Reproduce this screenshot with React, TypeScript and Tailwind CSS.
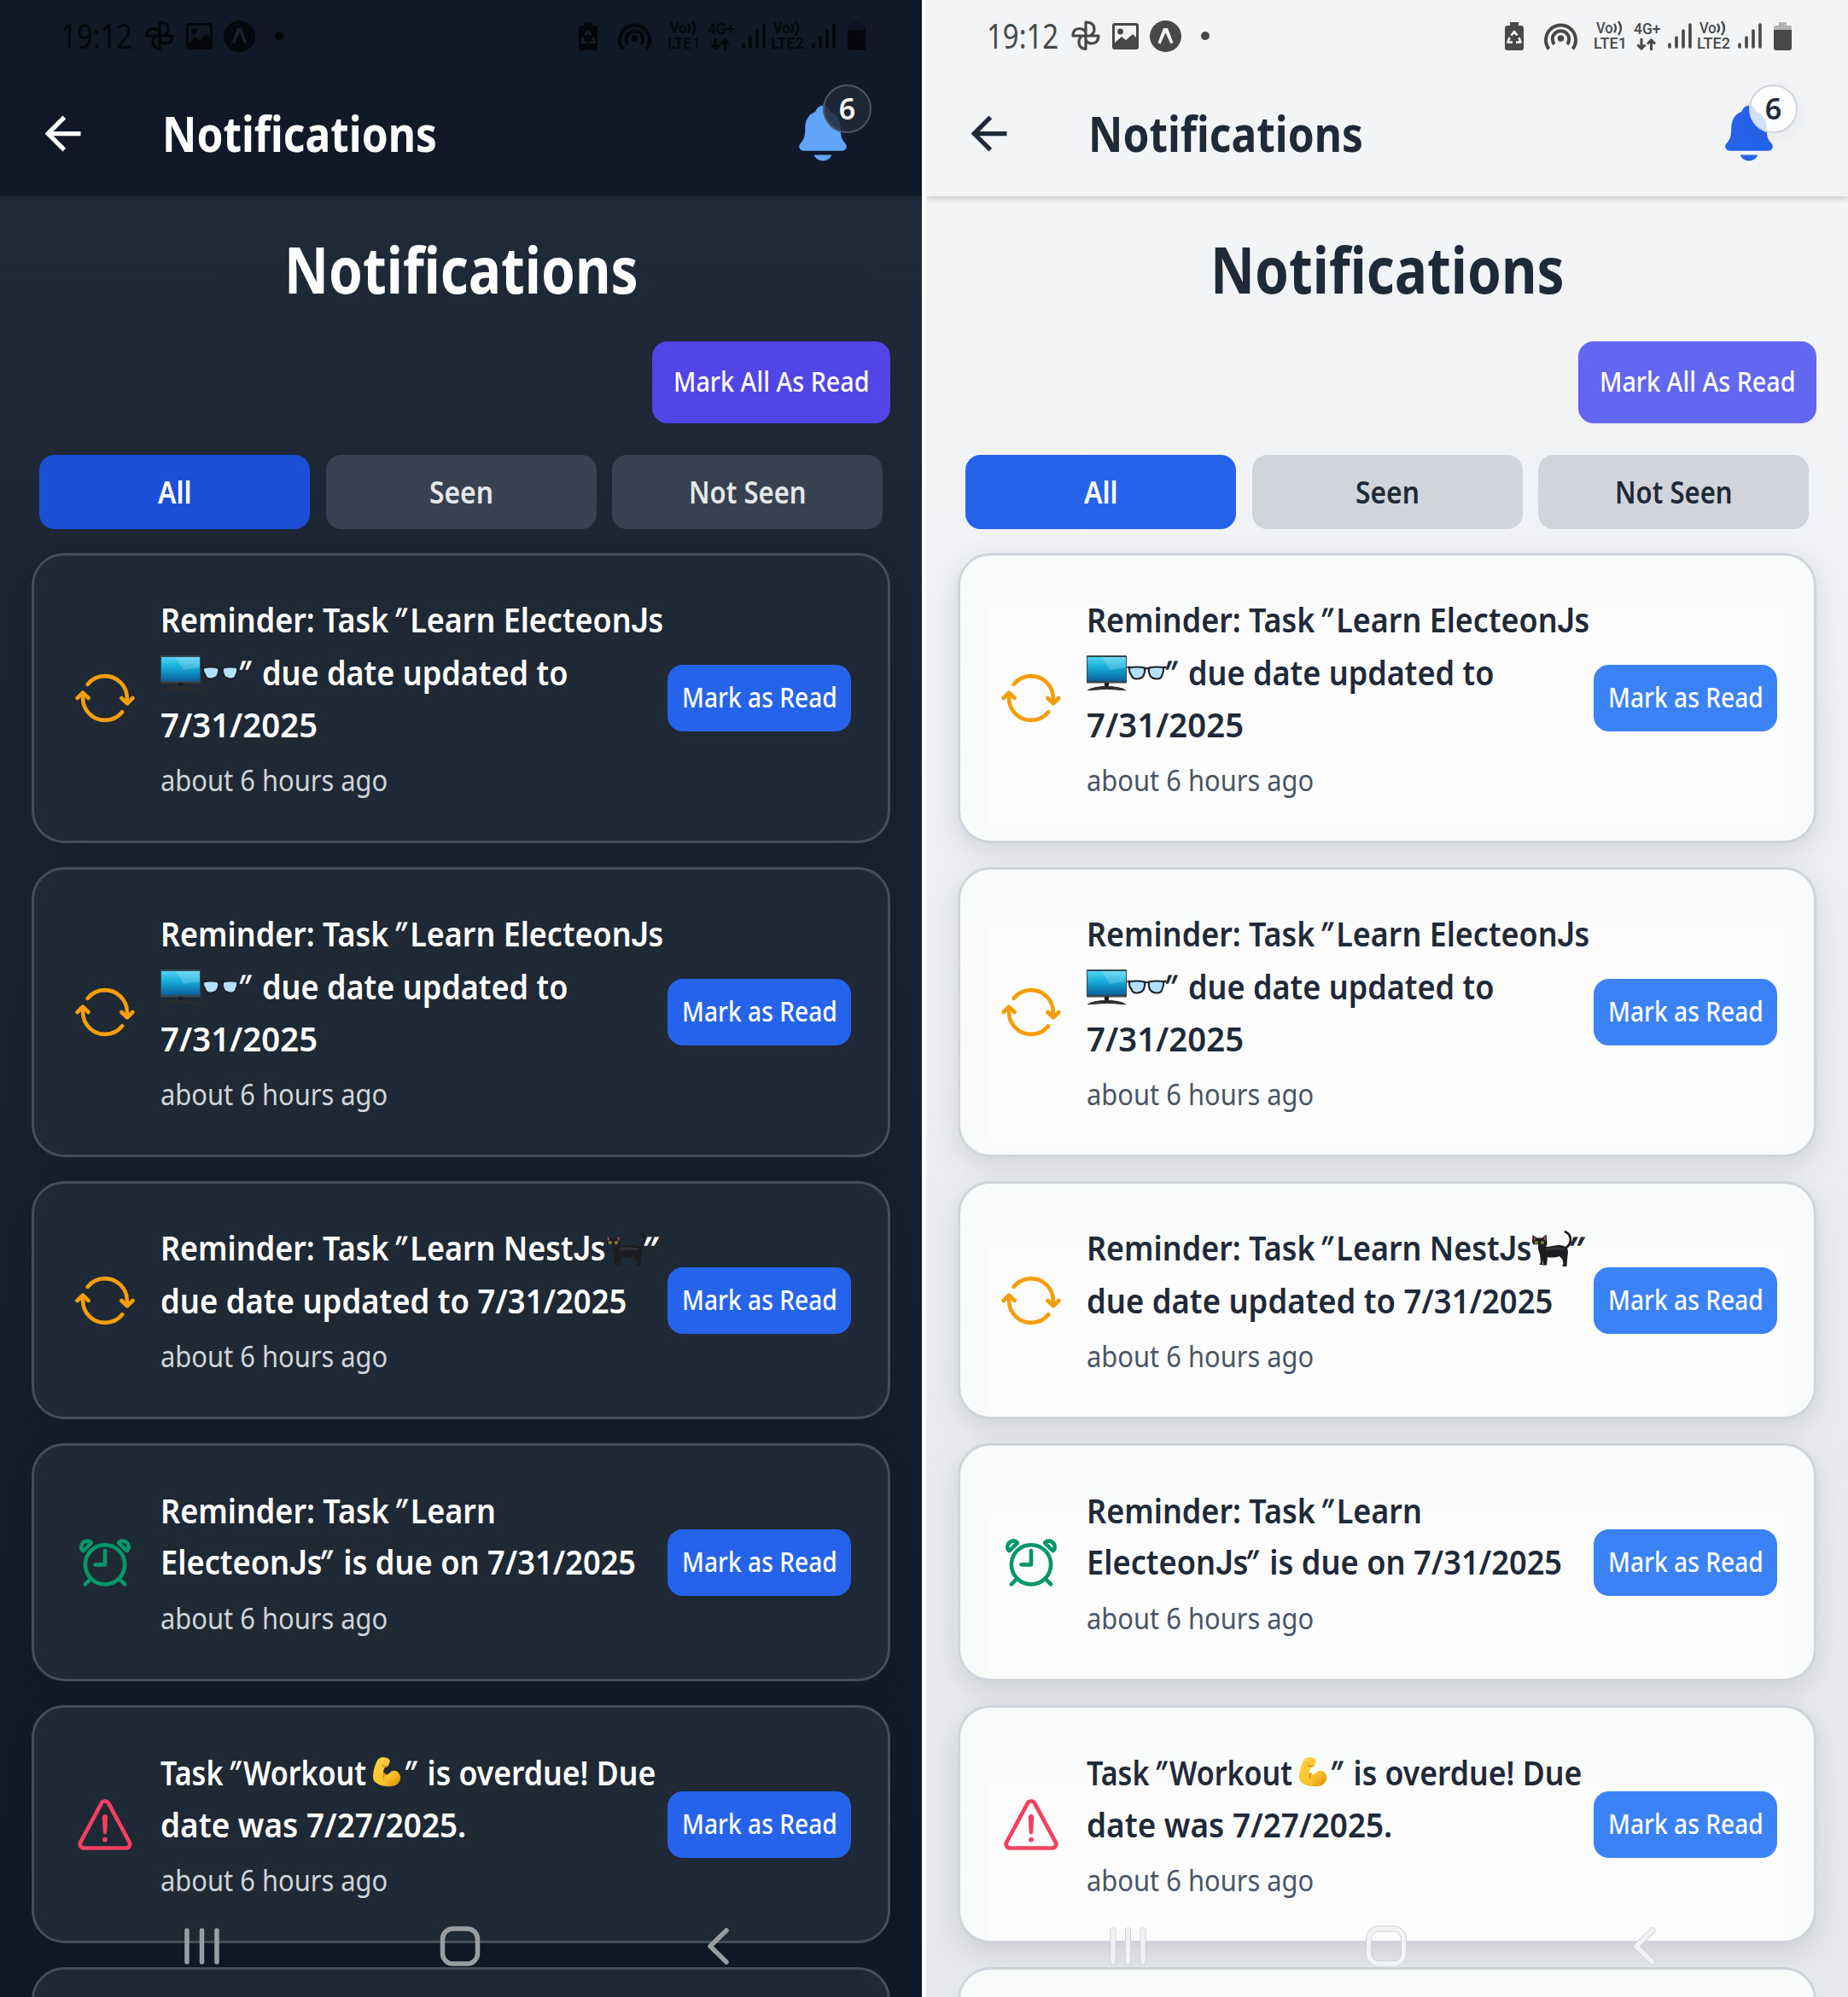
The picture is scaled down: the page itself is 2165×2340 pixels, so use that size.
import React, { useLayoutEffect, useRef, useState } from 'react';
import { IoNotifications, IoSyncOutline, IoAlarmOutline, IoWarningOutline } from 'react-icons/io5';
import { MdArrowBack } from 'react-icons/md';

/** Slants quote marks and keeps the capital J on the baseline. */
function styled(t: string) {
  return t.split(/(["J])/).map((s, i) =>
    s === '"' ? (
      <i key={i} className="-ml-[6px] mr-[6px] inline-block -skew-x-12 italic">{s}</i>
    ) : s === 'J' ? (
      <span key={i} className="font-[Roboto]">{s}</span>
    ) : (
      s
    ),
  );
}

/** Text squeezed or stretched horizontally to a given advance width. */
function Fit({ w, children, className = '' }: { w: number; children: string; className?: string }) {
  const ref = useRef<HTMLSpanElement>(null);
  const [s, setS] = useState(1);
  useLayoutEffect(() => {
    if (ref.current) setS(w / ref.current.offsetWidth);
  }, [w]);
  return (
    <span className={'inline-block whitespace-pre ' + className} style={{ width: w }}>
      <span ref={ref} className="inline-block origin-left whitespace-pre" style={{ transform: `scaleX(${s})` }}>
        {styled(children)}
      </span>
    </span>
  );
}

const Monitor = () => (
  <svg viewBox="0 0 47 44" className="mt-[4px] h-[44px] w-[47px] shrink-0">
    <defs>
      <linearGradient id="scr" x1="0" y1="0" x2="0" y2="1">
        <stop offset="0" stopColor="#4fd3f0" />
        <stop offset=".4" stopColor="#19b0dc" />
        <stop offset="1" stopColor="#0a5f9c" />
      </linearGradient>
    </defs>
    <rect x="0" y="1" width="47" height="32.500" rx="1" fill="#37474f" />
    <rect x="1" y="3" width="45" height="28" fill="url(#scr)" />
    <path d="M18 3h28v12L27 18z" fill="#fff" opacity=".18" />
    <path d="M21 33h5v6h-5z" fill="#1c1c1c" />
    <path d="M1.500 41.800q6-4 22-4.500Q40 37.800 45.500 41.800 24 38.800 1.500 41.800z" fill="#2b2b2b" stroke="#2b2b2b" />
  </svg>
);

const Glasses = () => (
  <svg viewBox="0 0 47 20" className="mt-[3px] h-[20px] w-[47px] shrink-0">
    <g fill="#b3e0ff" stroke="#1d2126" strokeWidth="2">
      <path d="M3 3.500q9-2 18 0 1 5-1.500 9.500-3 3.500-8 3.500t-6-4.500Q2.500 8.500 3 3.500z" />
      <path d="M44 3.500q-9-2-18 0-1 5 1.500 9.500 3 3.500 8 3.500t6-4.500q2-3.500 1.500-8.500z" />
    </g>
    <path d="M20 5q3.500-2 7 0" fill="none" stroke="#1d2126" strokeWidth="2" />
    <path d="M.5 3h4M42.500 3h4" stroke="#1d2126" strokeWidth="2.500" />
  </svg>
);

const Cat = () => (
  <svg viewBox="0 0 47 44" className="mt-[3px] h-[44px] w-[47px] shrink-0">
    <path d="M39 21q7-4 7-10 0-7-6-9.500" fill="none" stroke="#1d1d20" strokeWidth="2.800" strokeLinecap="round" />
    <path d="M1.500 5l5 3.500h6L17.500 4.500l1 10q0 3-1.500 4.500 5-.5 10-1.500 9-1.500 14 2 3 3 1.500 9.500l-1 12q0 1-1 1h-4.500l1.500-3-1-5-3.500-4q-7 2.500-14 1l-1 9.500h-5l1-2v-5l-1 6.500H9.500l1.500-3-1-10q-2.500-4-2-11Q1 18 1 12.500z" fill="#1d1d20" />
    <path d="M18 22q10-2 20 0" fill="none" stroke="#3c3c46" strokeWidth="3" strokeLinecap="round" opacity=".7" />
    <path d="M2.500 6.500l3 3-2.500 3zM16.500 6l-2.500 3 3 4z" fill="#8d5a60" />
    <circle cx="5.800" cy="14" r="1.900" fill="#b4bb3a" />
    <circle cx="13" cy="14" r="1.900" fill="#b4bb3a" />
    <path d="M5.800 12.500v3M13 12.500v3" stroke="#111" strokeWidth=".9" />
  </svg>
);

const Muscle = () => (
  <svg viewBox="0 0 47 44" className="h-[44px] w-[47px] shrink-0">
    <defs>
      <linearGradient id="arm" x1="0" y1="0" x2="1" y2="1">
        <stop offset="0" stopColor="#ffd54a" />
        <stop offset=".65" stopColor="#f8bf2b" />
        <stop offset="1" stopColor="#d98a00" />
      </linearGradient>
    </defs>
    <path d="M13 9q2-4 8-4 6 1 7 4l-2 6q-2 2-4 2-3 4-1 8 4 1 6-1 3-4 8-3 6 3 5 10-2 7-10 8-10 1-17-3-6-3-5-10 1-10 5-17z" fill="url(#arm)" />
    <path d="M19 14q2 3 5 1M22 24q-3 3-1 6" fill="none" stroke="#d98c0c" strokeWidth="1.500" strokeLinecap="round" />
  </svg>
);

type Part = { t: string; w: number } | { e: 'monitor' | 'glasses' | 'cat' | 'muscle' };
type Item = { icon: 'sync' | 'alarm' | 'warn'; lines: Part[][]; glow: string };

const emojis = { monitor: <Monitor />, glasses: <Glasses />, cat: <Cat />, muscle: <Muscle /> };

const electeon: Part[][] = [
  [{ t: 'Reminder: Task "Learn ElecteonJs', w: 589 }],
  [{ e: 'monitor' }, { e: 'glasses' }, { t: '" due date updated to', w: 383 }],
  [{ t: '7/31/2025', w: 184 }],
];

const items: Item[] = [
  { icon: 'sync', lines: electeon, glow: 'top-[59px] bottom-[22px]' },
  { icon: 'sync', lines: electeon, glow: 'top-[66px] bottom-[16px]' },
  {
    icon: 'sync',
    lines: [
      [{ t: 'Reminder: Task "Learn NestJs', w: 521 }, { e: 'cat' }, { t: '"', w: 19 }],
      [{ t: 'due date updated to 7/31/2025', w: 546 }],
    ],
    glow: 'top-[74px] bottom-[6px]',
  },
  {
    icon: 'alarm',
    lines: [[{ t: 'Reminder: Task "Learn', w: 393 }], [{ t: 'ElecteonJs" is due on 7/31/2025', w: 557 }]],
    glow: 'top-[80px] bottom-0',
  },
  {
    icon: 'warn',
    lines: [
      [{ t: 'Task "Workout', w: 241 }, { e: 'muscle' }, { t: '" is overdue! Due', w: 292 }],
      [{ t: 'date was 7/27/2025.', w: 358 }],
    ],
    glow: 'top-[92px] bottom-0',
  },
];

function Bars() {
  return (
    <svg viewBox="0 0 28 32" className="h-[32px] w-[28px]" stroke="currentColor" strokeWidth="3.600" strokeLinecap="round">
      <path d="M2 26v3M10 18v11M18 10v19M26 3v26" />
    </svg>
  );
}

function Volte({ n }: { n: number }) {
  return (
    <div className="h-[36px] w-[40px] font-[Roboto] font-medium">
      <div className="flex h-[17px] items-center pl-[3px] text-[19px] leading-[17px]">
        <Fit w={20}>Vo</Fit>
        <svg viewBox="0 0 12 18" className="h-[18px] w-[12px]" fill="none" stroke="currentColor" strokeWidth="2.400">
          <path d="M1 4q4 5 0 10M6 1q6 8 0 16" />
        </svg>
      </div>
      <div className="text-[19px] leading-[19px]"><Fit w={39}>{'LTE' + n}</Fit></div>
    </div>
  );
}

function StatusBar({ dark }: { dark: boolean }) {
  return (
    <div className={'flex h-[84px] items-center pr-[66px] pl-[71px] ' + (dark ? 'text-[#05070c]' : 'text-[#474948]')}>
      <div className="text-[40px] font-normal leading-[50px]"><Fit w={84}>19:12</Fit></div>
      <svg viewBox="0 0 34 36" className="ml-[15px] h-[36px] w-[34px]" fill="none" stroke="currentColor" strokeWidth="3.200" strokeLinejoin="round">
        <path d="M17 18V2q10 0 10 8.500 0 4.500-5 7.500M17 18H32q-.5 9-8 9-5 0-7-4.500M17 18v15.500q-8-.5-8-8 0-5 4-7.500M17 18H2q0-8.500 7.500-8.500 5 0 7.500 4.500" />
      </svg>
      <svg viewBox="0 0 31 31" className="ml-[14px] h-[31px] w-[31px]" fill="currentColor">
        <path fillRule="evenodd" d="M3 0h25q3 0 3 3v25q0 3-3 3H3q-3 0-3-3V3q0-3 3-3zm0 3v20l8-7 5 4 8-7 4 4V3z" />
        <circle cx="9.500" cy="10" r="3.400" />
      </svg>
      <svg viewBox="0 0 37 37" className="ml-[13px] h-[37px] w-[37px]">
        <circle cx="18.500" cy="18.500" r="18.500" fill="currentColor" />
        <path d="M9.500 26L16 9h5l6.500 17-3 1.500-6-13-6 13z" fill={dark ? '#1a202c' : '#f3f4f6'} />
        <path d="M18.500 14.500l5 13h-10z" fill="currentColor" />
      </svg>
      <div className="ml-[23px] h-[10px] w-[10px] rounded-full bg-current" />
      <div className="ml-auto flex items-center">
        <svg viewBox="0 0 22 33" className="h-[33px] w-[22px]">
          <path d="M6 0h10v4h3q3 0 3 3v23q0 3-3 3H3q-3 0-3-3V7q0-3 3-3h3z" fill="currentColor" />
          <path d="M7.500 15.500l3.500-4.500 3.500 4.500M5.500 18l-2 5.500h5.500M16.500 18l2 5.500h-5.500" fill="none" stroke={dark ? '#1a202c' : '#f3f4f6'} strokeWidth="2.600" strokeLinejoin="round" />
        </svg>
        <svg viewBox="0 0 39 34" className="ml-[24px] h-[34px] w-[39px]" fill="none" stroke="currentColor" strokeWidth="4">
          <path d="M5.500 32.500a17.500 17.500 0 1 1 28 0M12 27a9.700 9.700 0 1 1 15 0" />
          <circle cx="19.500" cy="20" r="3.800" fill="currentColor" stroke="none" />
        </svg>
        <div className="ml-[19px]"><Volte n={1} /></div>
        <div className="ml-[6px] flex h-[34px] w-[32px] flex-col items-center font-[Roboto] font-medium">
          <div className="text-[18px] leading-[17px]"><Fit w={31}>4G+</Fit></div>
          <svg viewBox="0 0 24 14" className="mt-[3px] h-[14px] w-[24px]" fill="none" stroke="currentColor" strokeWidth="3">
            <path d="M6 0v12M1.500 7.500 6 12l4.500-4.500M17.500 14V2M13 6.500 17.500 2 22 6.500" />
          </svg>
        </div>
        <div className="ml-[9px]"><Bars /></div>
        <div className="ml-[6px]"><Volte n={2} /></div>
        <div className="ml-[8px]"><Bars /></div>
        <svg viewBox="0 0 21 33" className="ml-[14px] h-[33px] w-[21px]" fill="currentColor">
          <path d="M6 0h9v4h4q2 0 2 2v3H0V6q0-2 2-2h4z" opacity=".38" />
          <path d="M0 9h21v21q0 3-3 3H3q-3 0-3-3z" />
        </svg>
      </div>
    </div>
  );
}

function Card({ item, dark }: { item: Item; dark: boolean }) {
  return (
    <div
      className={
        'relative flex shrink-0 items-center rounded-[38px] border-[3px] pr-[44px] pl-[46px] ' +
        (item.lines.length === 3 ? 'h-[340px] ' : 'h-[279px] ') +
        (dark
          ? 'border-[#434d5b] bg-[#1f2835] shadow-[0_8px_28px_rgba(14,20,34,0.25)]'
          : 'border-[#d1d5db] bg-[#f9fafa] shadow-[0_10px_32px_rgba(0,0,0,0.115)]')
      }
    >
      {!dark && <div className={'absolute right-[33px] left-[33px] bg-[#fcfcfc] ' + item.glow} />}
      <div className="relative w-[74px] shrink-0">
        {item.icon === 'sync' && <IoSyncOutline size={74} color="#f59e0b" />}
        {item.icon === 'alarm' && <IoAlarmOutline size={74} color="#059669" />}
        {item.icon === 'warn' && <IoWarningOutline size={74} color="#f43f5e" />}
      </div>
      <div className={'relative ml-[28px] text-[40px] font-semibold leading-[61px] ' + (dark ? 'text-white' : 'text-[#1f2937]')}>
        {item.lines.map((line, i) => (
          <div key={i} className="flex h-[61px] items-center">
            {line.map((p, j) => ('t' in p ? <Fit key={j} w={p.w}>{p.t}</Fit> : <React.Fragment key={j}>{emojis[p.e]}</React.Fragment>))}
          </div>
        ))}
        <div className={'mt-[8px] h-[54px] text-[34px] font-normal leading-[54px] ' + (dark ? 'text-[#d1d5db]' : 'text-[#4b5563]')}>
          <Fit w={266}>about 6 hours ago</Fit>
        </div>
      </div>
      <div
        className={
          'absolute right-[43px] flex h-[78px] w-[215px] items-center justify-center rounded-[18px] text-[33px] font-medium text-white ' +
          (dark ? 'bg-[#2563eb]' : 'bg-[#3b82f6]')
        }
      >
        <div className="-mt-[2px]"><Fit w={182}>Mark as Read</Fit></div>
      </div>
    </div>
  );
}

function NavBar({ dark }: { dark: boolean }) {
  const halo = dark ? 'none' : '#c9cbd0';
  const ink = dark ? '#999da3' : '#f1f2f3';
  return (
    <div className="absolute bottom-[36px] left-0 flex h-[48px] w-full items-center pl-[214px]">
      {[halo, ink].map((c, i) => (
        <svg
          key={i}
          viewBox="0 0 644 48"
          className={'h-[48px] w-[644px] shrink-0 ' + (i ? '-ml-[644px]' : '')}
          fill="none"
          stroke={c}
          strokeWidth={i ? 5.5 : 7}
          strokeLinecap="round"
          strokeLinejoin="round"
        >
          <path d="M5 6v37M22.500 6v37M40 6v37M637 6 618 24.500l19 18.500" />
          <rect x="304.500" y="4" width="41" height="41" rx="12" />
        </svg>
      ))}
    </div>
  );
}

function Phone({ dark }: { dark: boolean }) {
  const ink = dark ? 'text-white' : 'text-[#1f2937]';
  const tab = 'flex h-[87px] w-[317px] items-center justify-center rounded-[18px] ';
  const idle = dark ? 'bg-[#374151] text-[#e5e7eb]' : 'bg-[#d1d5db] text-[#1f2937]';
  return (
    <div className={'relative flex h-[2340px] w-[1080px] flex-col overflow-hidden ' + ink}>
      <header className={'relative z-10 h-[230px] shrink-0 ' + (dark ? 'bg-[#111827] shadow-[0_2px_8px_rgba(0,0,0,0.12)]' : 'bg-[#f3f4f6] shadow-[0_2px_8px_rgba(0,0,0,0.2)]')}>
        <StatusBar dark={dark} />
        <div className="flex h-[146px] items-start pl-[42px]">
          <MdArrowBack size={63} className="mt-[41px]" />
          <h1 className="mt-[36px] ml-[85px] text-[58px] font-bold leading-[72px]"><Fit w={322}>Notifications</Fit></h1>
          <div className="relative mt-[35px] ml-[415px] h-[74px] w-[74px]">
            <IoNotifications size={74} color={dark ? '#60a5fa' : '#2563eb'} />
            <div
              className={
                'absolute top-[-20px] left-[37px] flex h-[57px] w-[57px] items-center justify-center rounded-full border-[2.5px] text-[34px] font-semibold ' +
                (dark ? 'border-[#4b5563] bg-[#1f2937]/85' : 'border-[#d1d5db] bg-white/80 shadow-[4px_8px_24px_rgba(0,0,0,0.05)]')
              }
            >
              6
            </div>
          </div>
        </div>
      </header>
      <main className={'flex grow flex-col px-[37px] ' + (dark ? 'bg-linear-to-b from-[#1f2937] to-[#111827]' : 'bg-linear-to-b from-[#f3f4f6] to-[#e5e7eb]')}>
        <h2 className="mt-[35px] h-[100px] text-center text-[76px] font-bold leading-[100px]"><Fit w={415} className="text-left">Notifications</Fit></h2>
        <div className={'mt-[35px] flex h-[96px] w-[279px] shrink-0 items-center justify-center self-end rounded-[18px] pb-[3px] text-[33px] font-medium text-white ' + (dark ? 'bg-[#4f46e5]' : 'bg-[#6366f1]')}>
          <Fit w={230}>Mark All As Read</Fit>
        </div>
        <div className="mx-[9px] mt-[37px] mb-[28px] flex h-[87px] shrink-0 justify-between text-[36px] font-semibold">
          <div className={tab + 'text-white ' + (dark ? 'bg-[#1d4ed8]' : 'bg-[#2563eb]')}><Fit w={40}>All</Fit></div>
          <div className={tab + idle}><Fit w={75}>Seen</Fit></div>
          <div className={tab + idle}><Fit w={138}>Not Seen</Fit></div>
        </div>
        <div className="flex h-[1692px] shrink-0 flex-col gap-[28px]">
          {items.map((it, i) => <Card key={i} item={it} dark={dark} />)}
          <div className={'h-[279px] shrink-0 rounded-[38px] border-[3px] ' + (dark ? 'border-[#434d5b] bg-[#1f2835]' : 'border-[#d1d5db] bg-[#f9fafa]')} />
        </div>
      </main>
      <NavBar dark={dark} />
    </div>
  );
}

export default function App() {
  return (
    <div className="flex h-[2340px] w-[2165px] gap-[5px] overflow-hidden bg-white font-['Noto_Sans','Open_Sans',sans-serif]">
      <Phone dark />
      <Phone dark={false} />
    </div>
  );
}
